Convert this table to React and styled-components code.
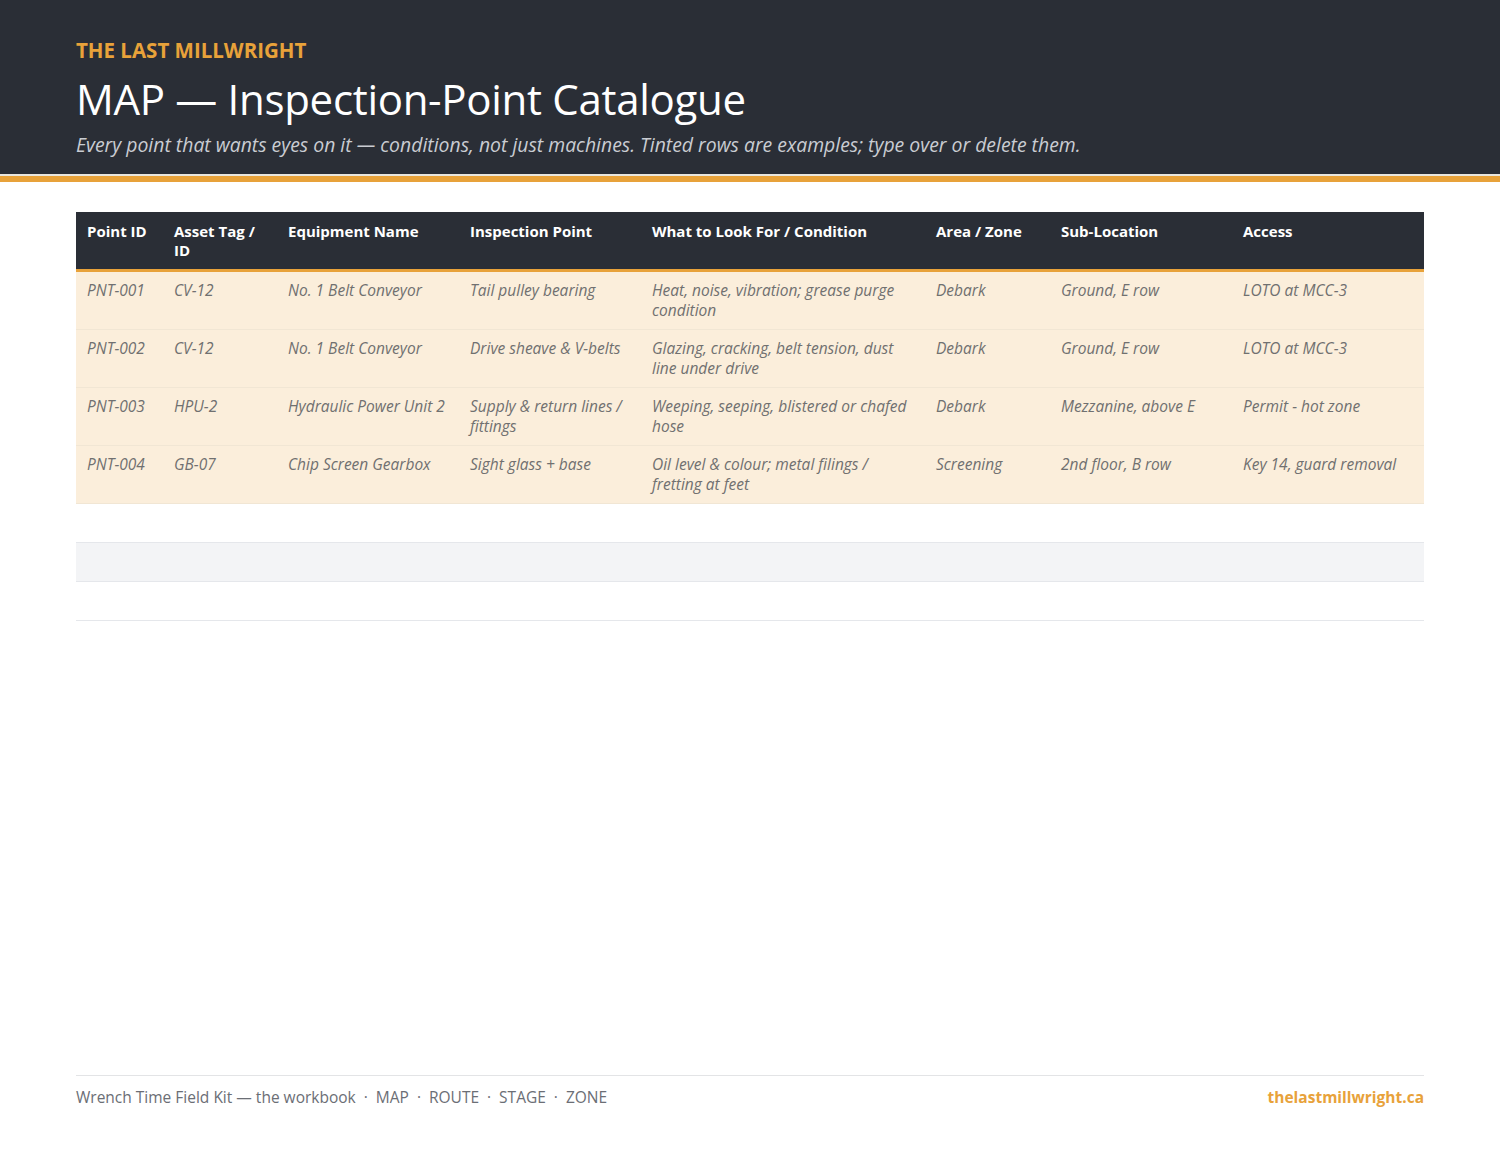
import React from 'react';
import styled, { createGlobalStyle } from 'styled-components';

const GlobalStyle = createGlobalStyle`
  html, body {
    margin: 0;
    padding: 0;
    background: #fff;
    font-family: "Open Sans", "Noto Sans", sans-serif;
  }
`;

const Page = styled.div`
  min-height: 1159px;
  display: flex;
  flex-direction: column;
`;

const Header = styled.header`
  background: #2a2e36;
  padding: 36px 76px 16px;
  border-bottom: 2px solid #e9e6df;
  box-shadow: 0 6px 0 0 #e8a23a;
  margin-bottom: 6px;
`;

const Brand = styled.div`
  color: #e8a23a;
  font-weight: 700;
  font-size: 20.5px;
  line-height: 28px;
`;

const Title = styled.h1`
  margin: 8px 0 0;
  color: #fff;
  font-weight: 400;
  font-size: 42px;
  line-height: 54px;
  letter-spacing: -0.3px;
`;

const Subtitle = styled.p`
  margin: 6px 0 0;
  color: #c9ccd2;
  font-style: italic;
  font-size: 19.4px;
  line-height: 26px;
`;

const Body = styled.main`
  flex: 1;
  padding: 30px 76px 0;
`;

const Table = styled.table`
  width: 100%;
  border-collapse: collapse;
  table-layout: fixed;
`;

const Th = styled.th`
  background: #2a2e36;
  color: #fff;
  text-align: left;
  vertical-align: top;
  font-weight: 700;
  font-size: 15px;
  line-height: 19px;
  padding: 10px 11px 9px;
  height: 37px;
  border-bottom: 3px solid #e8a23a;
`;

const Row = styled.tr`
  background: ${p => (p.$tint ? '#fbeedb' : p.$shade ? '#f3f4f6' : '#fff')};
  td { border-bottom: 1px solid ${p => (p.$tint ? '#f1e6d4' : '#e5e7eb')}; }
`;

const Td = styled.td`
  vertical-align: top;
  color: #707070;
  font-style: italic;
  font-size: 15.5px;
  line-height: 20px;
  padding: 8px 11px 9px;
  height: ${p => (p.$empty ? '21px' : '40px')};
`;

const Footer = styled.footer`
  margin: 0 76px;
  padding: 10px 0 51px;
  border-top: 1px solid #e3e4e6;
  display: flex;
  justify-content: space-between;
  align-items: center;
  font-size: 15.5px;
  line-height: 22px;
`;

const FootText = styled.span`
  color: #6b6e75;
`;

const Sep = styled.span`
  margin: 0 8px;
`;

const FootLink = styled.span`
  color: #e8a23a;
  font-weight: 700;
`;

const columns = [
  { label: 'Point ID', w: 87 },
  { label: 'Asset Tag / ID', w: 114 },
  { label: 'Equipment Name', w: 182 },
  { label: 'Inspection Point', w: 182 },
  { label: 'What to Look For / Condition', w: 284 },
  { label: 'Area / Zone', w: 125 },
  { label: 'Sub-Location', w: 182 },
  { label: 'Access', w: 192 },
];

const rows = [
  ['PNT-001', 'CV-12', 'No. 1 Belt Conveyor', 'Tail pulley bearing', 'Heat, noise, vibration; grease purge condition', 'Debark', 'Ground, E row', 'LOTO at MCC-3'],
  ['PNT-002', 'CV-12', 'No. 1 Belt Conveyor', 'Drive sheave & V-belts', 'Glazing, cracking, belt tension, dust line under drive', 'Debark', 'Ground, E row', 'LOTO at MCC-3'],
  ['PNT-003', 'HPU-2', 'Hydraulic Power Unit 2', 'Supply & return lines / fittings', 'Weeping, seeping, blistered or chafed hose', 'Debark', 'Mezzanine, above E', 'Permit - hot zone'],
  ['PNT-004', 'GB-07', 'Chip Screen Gearbox', 'Sight glass + base', 'Oil level & colour; metal filings / fretting at feet', 'Screening', '2nd floor, B row', 'Key 14, guard removal'],
];

const App = () => (
  <Page>
    <GlobalStyle />
    <Header>
      <Brand>THE LAST MILLWRIGHT</Brand>
      <Title>MAP — Inspection-Point Catalogue</Title>
      <Subtitle>
        Every point that wants eyes on it — conditions, not just machines. Tinted rows are examples; type over or delete them.
      </Subtitle>
    </Header>
    <Body>
      <Table>
        <colgroup>
          {columns.map(c => <col key={c.label} style={{ width: c.w }} />)}
        </colgroup>
        <thead>
          <tr>
            {columns.map(c => <Th key={c.label}>{c.label}</Th>)}
          </tr>
        </thead>
        <tbody>
          {rows.map(r => (
            <Row key={r[0]} $tint>
              {r.map((cell, i) => <Td key={i}>{cell}</Td>)}
            </Row>
          ))}
          {[false, true, false].map((shade, i) => (
            <Row key={'e' + i} $shade={shade}>
              {columns.map(c => <Td key={c.label} $empty />)}
            </Row>
          ))}
        </tbody>
      </Table>
    </Body>
    <Footer>
      <FootText>
        Wrench Time Field Kit — the workbook<Sep>·</Sep>MAP<Sep>·</Sep>ROUTE<Sep>·</Sep>STAGE<Sep>·</Sep>ZONE
      </FootText>
      <FootLink>thelastmillwright.ca</FootLink>
    </Footer>
  </Page>
);

export default App;
